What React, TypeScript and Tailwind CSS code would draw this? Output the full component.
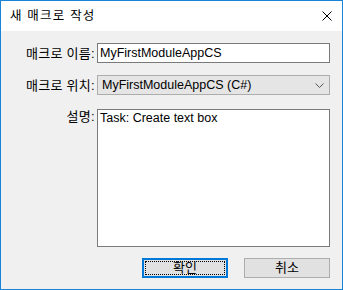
import React from 'react';

const font = { fontFamily: '"Liberation Sans", "Noto Sans CJK KR", sans-serif' };

function Label({ children, className = '' }: { children: React.ReactNode; className?: string }) {
  return (
    <div className={`w-[94px] shrink-0 text-right text-[13px] leading-[15px] text-black tracking-[0.3px] ${className}`}>
      {children}
    </div>
  );
}

export default function App() {
  return (
    <div
      className="w-[343px] h-[290px] border border-[#1883d7] bg-[#f0f0f0] flex flex-col overflow-hidden"
      style={font}
    >
      {/* title bar */}
      <div className="h-[30px] shrink-0 bg-white flex items-center justify-between pl-[9px] pr-[10px]">
        <span className="text-[12.5px] text-black tracking-[1.2px]">새 매크로 작성</span>
        <svg width="10" height="10" viewBox="0 0 10 10">
          <path d="M0.5 0.5 L9.5 9.5 M9.5 0.5 L0.5 9.5" stroke="#000" strokeWidth="1" />
        </svg>
      </div>

      {/* body */}
      <div className="flex-1 flex flex-col pt-[12px]">
        <div className="flex items-center">
          <Label>매크로 이름:</Label>
          <div className="ml-[2px] w-[233px] h-[20px] bg-white border border-[#7a7a7a] flex items-center pl-[2px] text-[12.5px] text-black">
            MyFirstModuleAppCS
          </div>
        </div>

        <div className="flex items-center mt-[12px]">
          <Label>매크로 위치:</Label>
          <div className="ml-[2px] w-[233px] h-[20px] bg-[#e5e5e5] border border-[#adadad] flex items-center justify-between pl-[4px] pr-[5px] text-[12.5px] text-black">
            <span>MyFirstModuleAppCS (C#)</span>
            <svg width="9" height="5" viewBox="0 0 9 5">
              <path d="M0.5 0.5 L4.5 4.5 L8.5 0.5" fill="none" stroke="#555" strokeWidth="1" />
            </svg>
          </div>
        </div>

        <div className="flex items-start mt-[14px]">
          <Label>설명:</Label>
          <div className="ml-[2px] w-[233px] h-[138px] bg-white border border-[#7a7a7a] pl-[2px] pt-[1px] text-[12.5px] leading-[15px] text-black">
            Task: Create text box
          </div>
        </div>

        <div className="flex mt-[11px] pl-[141px] gap-[16px]">
          <div className="w-[86px] h-[20px] border-2 border-[#0078d7] bg-[#e1e1e1] p-[1px]">
            <div className="w-full h-full border border-dotted border-black flex items-center justify-center text-[13px] text-black">
              확인
            </div>
          </div>
          <div className="w-[86px] h-[20px] border border-[#adadad] bg-[#e1e1e1] flex items-center justify-center text-[13px] text-black">
            취소
          </div>
        </div>
      </div>
    </div>
  );
}
